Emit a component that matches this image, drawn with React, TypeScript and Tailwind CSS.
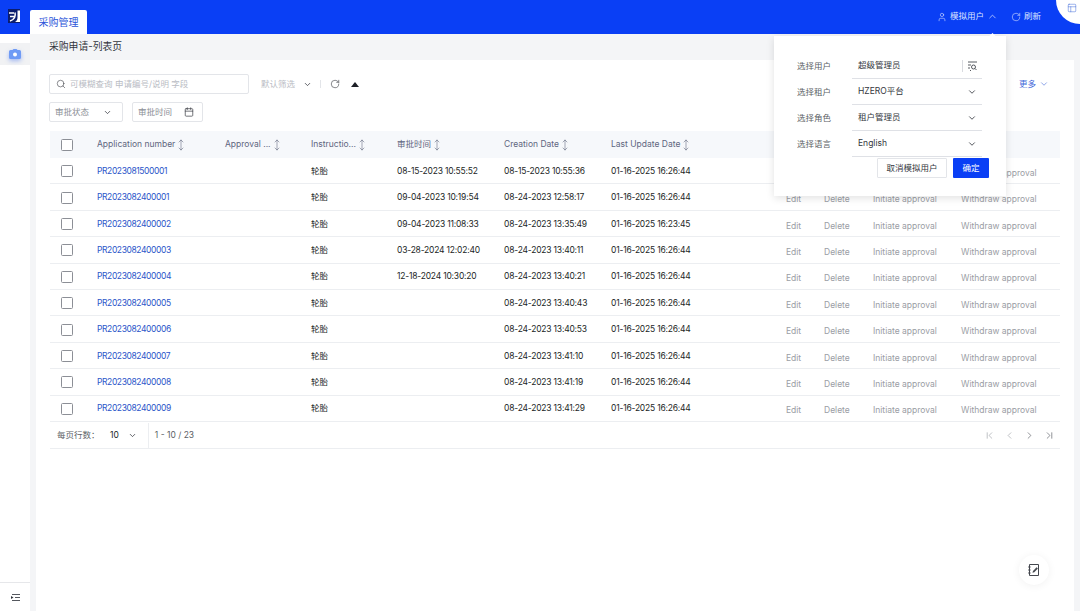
import { Calendar, ChevronDown, ChevronFirst, ChevronLast, ChevronLeft, ChevronRight, ChevronUp, MoveVertical, PanelsTopLeft, RotateCw, Search, User } from "lucide-react"

const ROWS = [
  ["PR2023081500001", "08-15-2023 10:55:52", "08-15-2023 10:55:36", "01-16-2025 16:26:44"],
  ["PR2023082400001", "09-04-2023 10:19:54", "08-24-2023 12:58:17", "01-16-2025 16:26:44"],
  ["PR2023082400002", "09-04-2023 11:08:33", "08-24-2023 13:35:49", "01-16-2025 16:23:45"],
  ["PR2023082400003", "03-28-2024 12:02:40", "08-24-2023 13:40:11", "01-16-2025 16:26:44"],
  ["PR2023082400004", "12-18-2024 10:30:20", "08-24-2023 13:40:21", "01-16-2025 16:26:44"],
  ["PR2023082400005", "", "08-24-2023 13:40:43", "01-16-2025 16:26:44"],
  ["PR2023082400006", "", "08-24-2023 13:40:53", "01-16-2025 16:26:44"],
  ["PR2023082400007", "", "08-24-2023 13:41:10", "01-16-2025 16:26:44"],
  ["PR2023082400008", "", "08-24-2023 13:41:19", "01-16-2025 16:26:44"],
  ["PR2023082400009", "", "08-24-2023 13:41:29", "01-16-2025 16:26:44"],
]

const gridCols = "grid grid-cols-[47px_128px_86px_86px_107px_107px_175px_38px_49px_88px_99px] items-center"

function Checkbox() {
  return <span className="ml-[11px] block h-3 w-3 rounded-[1.5px] border border-[#8c8f96] bg-white" />
}

function HeadCell({ label }: { label: string }) {
  return (
    <div className="flex items-center text-[#5f6680]">
      <span>{label}</span>
      <MoveVertical size={12} strokeWidth={1} className="text-[#4f566e]" />
    </div>
  )
}

function Logo() {
  return (
    <svg width="12" height="14" viewBox="0 0 12 14" className="block">
      <rect width="12" height="14" fill="#0b1d6e" />
      <path d="M1 4h5M2 7.5h5" stroke="#fff" strokeWidth="1.5" fill="none" />
      <path d="M7 3.5c.8 3.5-.5 7-5 8.5" stroke="#fff" strokeWidth="1.5" fill="none" />
      <path d="M9.5 1.5v7c0 2-1 3.6-2.5 4.5h5V1.5z" fill="#fff" />
    </svg>
  )
}

function PopField({ label, value, search }: { label: string; value: string; search?: boolean }) {
  return (
    <div className="flex h-[26px] items-center">
      <span className="w-[78px] pl-[23px] text-[#5c5f66] whitespace-nowrap">{label}</span>
      <div className="flex h-[25px] w-[130px] items-center justify-between border-b border-[#dfe1e6] pl-[6px] pr-[5px] text-[#33363d]">
        <span>{value}</span>
        {search ? (
          <span className="flex h-[12px] items-center border-l border-[#d9dbe0] pl-[5px]">
            <svg width="9" height="10" viewBox="0 0 9 10" fill="none" stroke="#44474e" strokeWidth="0.9">
              <path d="M0 1h9M0 4h3M0 7h2M2 9.5h1" />
              <circle cx="5.5" cy="6" r="2" />
              <path d="M7 7.5l1.5 1.5" />
            </svg>
          </span>
        ) : (
          <ChevronDown size={10} strokeWidth={2} className="text-[#33363d]" />
        )}
      </div>
    </div>
  )
}

export default function App() {
  return (
    <div className="relative flex h-[611px] w-[1080px] flex-col overflow-hidden bg-white font-['Inter','Noto_Sans_CJK_SC',sans-serif] text-[8.5px] text-[#1c1f26]">
      <header className="flex h-[34px] shrink-0 items-end bg-[#0a3ff5]">
        <div className="flex h-[34px] w-[30px] items-center justify-center pb-[3px] pr-[3px]">
          <Logo />
        </div>
        <div className="flex h-[24px] w-[57px] items-center justify-center rounded-t-[2px] bg-white text-[10px] text-[#2b55d9]">采购管理</div>
        <div className="ml-auto flex h-[34px] items-center pb-[1px] text-[#dbe3ff]">
          <User size={10} strokeWidth={1.4} />
          <span className="ml-[3px]">模拟用户</span>
          <ChevronUp size={11} strokeWidth={1.6} className="ml-[3px]" />
          <RotateCw size={10} strokeWidth={1.4} className="ml-[13px]" />
          <span className="ml-[3px] mr-[39px]">刷新</span>
        </div>
      </header>

      <div className="flex min-h-0 flex-1">
        <aside className="flex w-[30px] shrink-0 flex-col">
          <div className="mt-[9px] flex h-[22px] items-center justify-center bg-[#f1f2f4]">
            <svg width="14" height="11" viewBox="0 0 14 11" className="drop-shadow-[0_2px_2px_rgba(90,130,240,0.5)]">
              <path d="M1 2.5a1.5 1.5 0 0 1 1.5-1.5h2L5.5 0h3l1 1h2A1.5 1.5 0 0 1 13 2.5v6A1.5 1.5 0 0 1 11.5 10h-9A1.5 1.5 0 0 1 1 8.5z" fill="#6f9bf5" />
              <circle cx="7" cy="5.5" r="2" fill="#fff" />
            </svg>
          </div>
          <div className="mt-auto flex h-[29px] items-center justify-center border-t border-[#e6e7ea]">
            <svg width="9" height="9" viewBox="0 0 9 9" stroke="#55585f" strokeWidth="1" fill="none">
              <path d="M1 1.5h8M4 4.5h5M1 7.5h8" />
              <path d="M0 3l2.5 1.5L0 6z" fill="#33363d" stroke="none" />
            </svg>
          </div>
        </aside>

        <main className="flex min-w-0 flex-1 flex-col bg-[#f4f5f7]">
          <div className="flex h-[26px] shrink-0 items-center pl-[19px] text-[9.8px] text-[#33363d]">采购申请-列表页</div>
          <section className="ml-[6px] mr-[6px] flex-1 bg-white pl-[14px] pr-[14px] pt-[14px]">
            <div className="-ml-[1px] flex h-[20px] items-center">
              <div className="flex h-[20px] w-[200px] items-center rounded-[2px] border border-[#e3e5e9] pl-[6px] text-[#b9bcc4]">
                <Search size={10} strokeWidth={1.4} className="text-[#3a3d44]" />
                <span className="ml-[4px]">可模糊查询 申请编号/说明 字段</span>
              </div>
              <span className="ml-[12px] text-[#b9bcc4]">默认筛选</span>
              <ChevronDown size={9} strokeWidth={2} className="ml-[8px] text-[#33363d]" />
              <span className="ml-[8px] h-[8px] border-l border-[#e3e5e9]" />
              <RotateCw size={10} strokeWidth={1.4} className="ml-[9px] text-[#33363d]" />
              <svg width="8" height="5" viewBox="0 0 8 5" className="ml-[11px]">
                <path d="M4 0l4 5H0z" fill="#1c1f26" />
              </svg>
              <span className="ml-auto mr-[11px] flex items-center gap-[3px] text-[#3f68d9]">
                更多
                <ChevronDown size={10} strokeWidth={1.4} />
              </span>
            </div>

            <div className="-ml-[1px] mt-[8px] flex h-[20px] gap-[9px]">
              <div className="flex w-[74px] items-center justify-between rounded-[2px] border border-[#e3e5e9] pl-[5px] pr-[10px] text-[#8c8f96]">
                审批状态
                <ChevronDown size={9} strokeWidth={2} className="text-[#33363d]" />
              </div>
              <div className="flex w-[71px] items-center justify-between rounded-[2px] border border-[#e3e5e9] pl-[5px] pr-[8px] text-[#8c8f96]">
                审批时间
                <Calendar size={10} strokeWidth={1.8} className="text-[#44474e]" />
              </div>
            </div>

            <div className="mt-[9px]">
              <div className={`${gridCols} h-[27px] bg-[#f6f8fb]`}>
                <Checkbox />
                <HeadCell label="Application number" />
                <HeadCell label="Approval ..." />
                <HeadCell label="Instructio..." />
                <HeadCell label="审批时间" />
                <HeadCell label="Creation Date" />
                <HeadCell label="Last Update Date" />
              </div>
              {ROWS.map((row) => (
                <div key={row[0]} className={`${gridCols} h-[26.4px] border-b border-[#eceef1] pt-[1px]`}>
                  <Checkbox />
                  <span className="tracking-[-0.4px] text-[#2b55c9]">{row[0]}</span>
                  <span />
                  <span>轮胎</span>
                  <span className="tracking-[-0.2px]">{row[1]}</span>
                  <span className="tracking-[-0.2px]">{row[2]}</span>
                  <span className="tracking-[-0.2px]">{row[3]}</span>
                  <span className="pt-[4px] text-[#9a9da4]">Edit</span>
                  <span className="pt-[4px] text-[#9a9da4]">Delete</span>
                  <span className="pt-[4px] text-[#9a9da4]">Initiate approval</span>
                  <span className="pt-[4px] text-[#9a9da4]">Withdraw approval</span>
                </div>
              ))}
              <div className="flex h-[27px] items-center border-b border-[#eceef1] pl-[7px] pt-[1px] text-[#5c5f66]">
                <span className="w-[53px]">每页行数：</span>
                <span className="text-[#1c1f26]">10</span>
                <ChevronDown size={9} strokeWidth={2} className="ml-[9px] text-[#33363d]" />
                <span className="ml-[11px] h-full border-l border-[#eceef1]" />
                <span className="ml-[6px]">1 - 10 / 23</span>
                <div className="ml-auto flex items-center gap-[9px] pr-[5px] text-[#8c8f96]">
                  <ChevronFirst size={11} strokeWidth={1.2} />
                  <ChevronLeft size={11} strokeWidth={1.2} />
                  <ChevronRight size={11} strokeWidth={1.4} className="text-[#55585f]" />
                  <ChevronLast size={11} strokeWidth={1.4} className="text-[#55585f]" />
                </div>
              </div>
            </div>
          </section>
        </main>
      </div>

      {/* simulate-user popover */}
      <div className="absolute left-[774px] top-[36px] h-[160px] w-[232px] bg-white pt-[17px] shadow-[0_2px_8px_rgba(0,0,0,0.12)]">
        <span className="absolute -top-[2px] left-[216px] h-[5px] w-[5px] rotate-45 bg-white" />
        <PopField label="选择用户" value="超级管理员" search />
        <PopField label="选择租户" value="HZERO平台" />
        <PopField label="选择角色" value="租户管理员" />
        <PopField label="选择语言" value="English" />
        <div className="mt-[1px] flex justify-end gap-[6px] pr-[17px]">
          <span className="flex h-[20px] w-[70px] items-center justify-center rounded-[1px] border border-[#e3e5e9] text-[#33363d]">取消模拟用户</span>
          <span className="flex h-[20px] w-[36px] items-center justify-center rounded-[1px] bg-[#0a3ff5] text-white">确定</span>
        </div>
      </div>

      {/* corner layout toggle */}
      <div className="absolute -right-[24px] -top-[24px] flex h-[48px] w-[48px] items-start justify-start rounded-full bg-white pl-[11px] pt-[27px]">
        <PanelsTopLeft size={10} strokeWidth={1.2} className="text-[#3f68d9]" />
      </div>

      {/* floating note button */}
      <div className="absolute left-[1019px] top-[555px] flex h-[30px] w-[30px] items-center justify-center rounded-full bg-white shadow-[0_1px_8px_rgba(0,0,0,0.06)]">
        <svg width="14" height="14" viewBox="0 0 14 14" fill="none" stroke="#44474e" strokeWidth="1">
          <path d="M2.5 1.5h9v11h-9zM1.2 4h2.4M1.2 7h2.4M1.2 10h2.4" />
          <path d="M5.5 9.8l.5-1.8 3.6-3.7 1.3 1.3-3.6 3.7z" fill="#44474e" stroke="none" />
        </svg>
      </div>
    </div>
  )
}
